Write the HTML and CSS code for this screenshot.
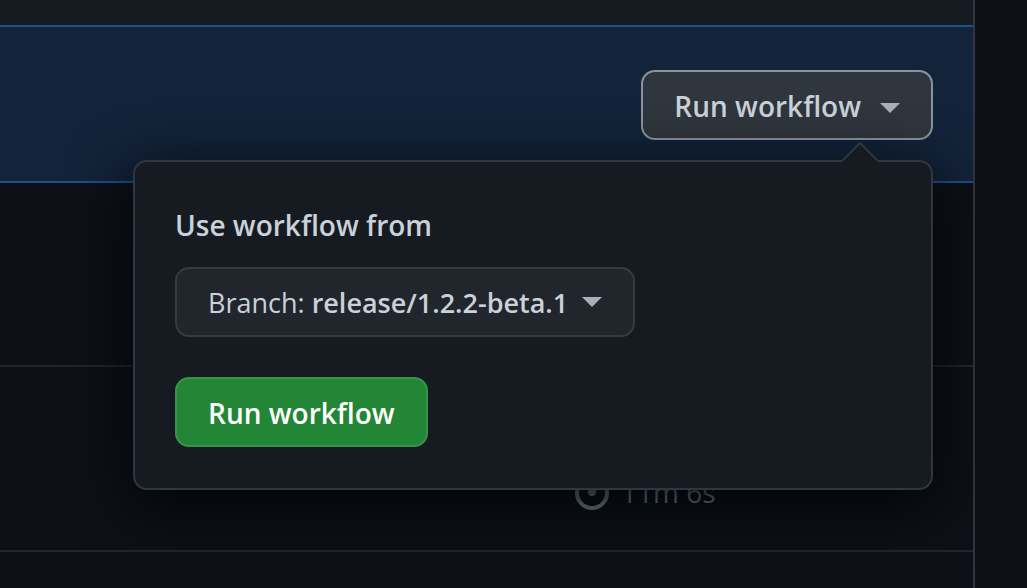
FILE: index.html
```html
<!DOCTYPE html>
<html lang="en">
<head>
<meta charset="utf-8">
<title>Run workflow</title>
<link rel="stylesheet" href="styles.css">
</head>
<body>
<main class="runs">
  <div class="runs-header"></div>
  <section class="dispatch">
    <div class="dispatch-menu">
      <button class="btn btn-toggle" type="button" aria-expanded="true">Run workflow<span class="caret"></span></button>
      <form class="popover">
        <svg class="pointer" width="38" height="20" viewBox="0 0 38 20" aria-hidden="true"><path d="M0 20 19 1 38 20Z" fill="#161b22"/><path d="M0 19H1L19 1 37 19H38" fill="none" stroke="#30363d" stroke-width="2"/></svg>
        <p class="label" id="from">Use workflow from</p>
        <button class="btn btn-branch" type="button" aria-describedby="from"><span>Branch: <strong>release/1.2.2-beta.1</strong></span><span class="caret"></span></button>
        <button class="btn btn-primary" type="button">Run workflow</button>
      </form>
    </div>
  </section>
  <div class="run"></div>
  <div class="run">
    <div class="duration">
      <svg width="34" height="34" viewBox="0 0 34 34" aria-hidden="true"><circle cx="17" cy="17" r="15" fill="none" stroke="#8b949e" stroke-width="4"/><circle cx="17" cy="16" r="4" fill="#8b949e"/><path d="M17 16 23 10" stroke="#8b949e" stroke-width="4" stroke-linecap="round"/></svg>
      <span>11m 6s</span>
    </div>
  </div>
</main>
</body>
</html>
```
FILE: styles.css
```css
* { box-sizing: border-box; }
body {
  margin: 0;
  background: #0d1117;
  color: #c9d1d9;
  font-family: "Segoe UI", "Open Sans", "Noto Sans", sans-serif;
  font-size: 28px;
  line-height: 42px;
  overflow: hidden;
}
.runs {
  min-height: 100vh;
  margin-right: 52px;
  border-right: 2px solid #30363d;
}
.runs-header { height: 25px; background: #161b22; }
.dispatch {
  display: flex;
  justify-content: flex-end;
  padding: 43px 40px 41px;
  border: solid #1f4f8f;
  border-width: 2px 0;
  background: #132339;
}
.dispatch-menu { position: relative; }
.btn {
  display: flex;
  align-items: center;
  height: 70px;
  padding: 2px 31px 0;
  border: 2px solid #363b42;
  border-radius: 14px;
  background: #21262d;
  color: #c9d1d9;
  font: inherit;
  white-space: nowrap;
}
.btn strong { font-weight: 600; }
.btn-toggle {
  gap: 19px;
  border-color: #8b949e;
  background: #30363d;
  font-weight: 600;
}
.btn-toggle .caret { margin-top: 4px; }
.btn-branch { gap: 14px; font-size: 27px; }
.btn-branch .caret { margin-bottom: 2px; }
.btn-primary {
  margin-top: 40px;
  border-color: #39914a;
  background: #238636;
  color: #fff;
  font-weight: 600;
}
.caret {
  border: 10px solid transparent;
  border-top-color: #a9b0b8;
  border-bottom: 0;
}
.popover {
  position: absolute;
  z-index: 1;
  top: 90px;
  right: 0;
  width: 800px;
  padding: 42px 40px 41px;
  border: 2px solid #30363d;
  border-radius: 14px;
  background: #161b22;
  box-shadow: 0 16px 64px #010409;
}
.pointer {
  position: absolute;
  top: -20px;
  right: 52px;
}
.label { margin: 0 0 21px; font-weight: 600; }
.run {
  height: 184px;
  border-bottom: 2px solid #21262d;
}
.run + .run { padding: 104px 0 0 575px; height: 185px; }
.duration {
  display: flex;
  align-items: center;
  gap: 12px;
  color: #8b949e;
}
.duration span { padding-bottom: 4px; }
.duration svg { margin-bottom: 2px; }
```
